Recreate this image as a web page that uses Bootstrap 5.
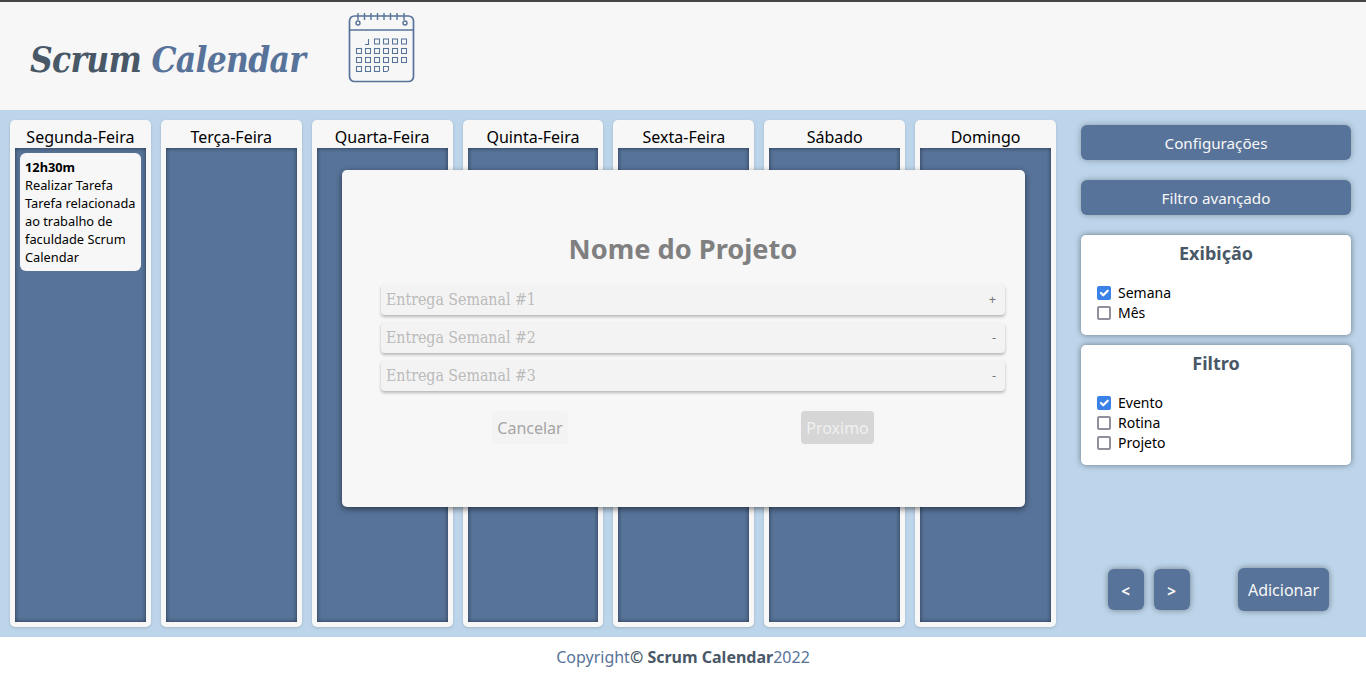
<!DOCTYPE html>
<html lang="pt-BR">
<head>
<meta charset="utf-8">
<title>Scrum Calendar</title>
<link href="https://cdn.jsdelivr.net/npm/bootstrap@5.3.0/dist/css/bootstrap.min.css" rel="stylesheet">
<style>
html,body{height:675px;overflow:hidden}
body{font-family:"Noto Sans",sans-serif;font-size:16px;color:#000;background:#fff}
.top-head{height:110px;background:#f7f7f7;border-top:2px solid #444;padding-left:30px}
.brand-text{font-family:"DejaVu Serif Condensed","DejaVu Serif",serif;font-stretch:condensed;font-weight:700;font-style:italic;font-size:35px;letter-spacing:-.72px;color:#495867;width:318px;line-height:1;margin:0;padding-top:6px}
.brand-text span{color:#577399}
.brand-icon{width:67px;height:72px;margin-top:9px}
.work-area{height:527px;background:#bdd5ea}
.days-wrap{width:1066px;padding:10px;gap:10px}
.day-col{flex:1 1 0;min-width:0;background:#f7f7f7;border-radius:5px;padding:0 5px 5px;box-shadow:0 1px 3px rgba(0,0,0,.15)}
.day-name{height:28px;line-height:34px;text-align:center;font-size:16px;white-space:nowrap}
.day-panel{background:#577399;padding:5px;box-shadow:inset 0 0 4px rgba(0,0,0,.55)}
.task-item{background:#f7f7f7;border-radius:6px;padding:5px;font-size:12.8px;line-height:18px}
.side-wrap{width:300px;padding:15px 15px 26px}
.side-btn{display:block;width:100%;height:35px;padding:1px 0 0;background:#577399;border:0;color:#f7f7f7;font-size:15.2px;border-radius:6px;box-shadow:0 0 6px rgba(0,0,0,.3);margin-bottom:20px}
.side-btn:hover,.nav-btn:hover,.add-btn:hover{background:#577399;color:#f7f7f7}
.opt-box{background:#fff;border:0;border-radius:5px;box-shadow:0 0 6px rgba(0,0,0,.45);margin-bottom:10px;padding:6px 16px 12px}
.opt-title{font-size:18px;font-weight:700;color:#495867;text-align:center;line-height:25px;margin:0 0 17px}
.opt-row{display:flex;align-items:center;min-height:20px;margin:0;padding:0;font-size:14px;line-height:20px}
.opt-row .form-check-input{width:14px;height:14px;margin:0 7px 0 0;float:none;border:2px solid #8f8f9d;border-radius:2px;flex:none}
.opt-row .form-check-input:checked{background-color:#3b82e8;border-color:#3b82e8;background-size:15px;background-position:center;background-origin:border-box}
.nav-btn{width:36px;height:41px;padding:3px 1px 0 0;background:#577399;border:0;color:#f7f7f7;font-size:15.2px;font-weight:700;border-radius:6px;box-shadow:0 0 6px rgba(0,0,0,.4)}
.add-btn{width:91px;height:43px;padding:0;background:#577399;border:0;color:#f7f7f7;font-size:16px;border-radius:6px;box-shadow:0 0 6px rgba(0,0,0,.4)}
.nav-group{gap:10px;margin-left:27px;margin-right:48px;margin-top:1px}
.bottom-row{align-items:flex-start}
.modal-box{position:absolute;left:342px;top:60px;width:683px;height:337px;background:#f7f7f7;border-radius:5px;box-shadow:0 2px 6px rgba(0,0,0,.5);padding:61px 20px 0 39px}
.modal-title-text{font-size:27.2px;font-weight:700;color:#808080;text-align:center;line-height:36px;margin:0 0 17px 0;padding:0;width:604px}
.entry-row{height:31px;background:#f3f3f3;border-radius:4px;box-shadow:0 2px 3px rgba(0,0,0,.25);margin-bottom:7px;padding:0 9px 0 5px}
.entry-row input{flex:1;border:0;outline:0;background:transparent;padding:1px 0 0;font-family:"DejaVu Serif Condensed","DejaVu Serif",serif;font-stretch:condensed;font-size:15.8px;color:#bbb;letter-spacing:-.02px}
.entry-row input::placeholder{color:#bbb;opacity:1}
.entry-sign{font-size:12.8px;color:#777}
.modal-actions{margin-top:20px}
.btn-cancel{width:76px;height:33px;padding:0;background:#f3f3f3;border:0;border-radius:4px;color:#a5a5a5;font-size:16px;margin-left:111px}
.btn-next{width:73px;height:33px;padding:0;background:#d6d6d6;border:0;border-radius:4px;color:#f0f0f0;font-size:16px;margin-left:233px}
.page-foot{height:38px;line-height:40px;text-align:center;color:#577399;font-size:16px;background:#fff}
.page-foot strong{color:#495867}
</style>
</head>
<body>
<header class="top-head d-flex align-items-center">
  <h1 class="brand-text">Scrum <span>Calendar</span></h1>
  <svg class="brand-icon align-self-start" viewBox="348 11 67 72" fill="none" stroke="#577399" stroke-width="1.4" aria-label="Calendário">
    <rect x="349.5" y="16" width="64" height="65.5" rx="5" stroke-width="1.7"/>
    <line x1="349.5" y1="30" x2="413.5" y2="30"/>
    <path d="M358 13v7M364.500 13v7M371 13v7M377.500 13v7M384 13v7M390.500 13v7M397 13v7M404 13v7"/>
    <circle cx="358" cy="23" r="2"/><circle cx="405" cy="23" r="2"/>
    <path d="M365 44.500h3.500v-5.500" stroke-width="1.1"/>
    <g stroke-width="1.050">
      <rect x="374.500" y="39" width="5" height="5"/><rect x="383.500" y="39" width="5" height="5"/><rect x="392.500" y="39" width="5" height="5"/><rect x="401.500" y="39" width="5" height="5"/>
      <rect x="356.500" y="48.500" width="5" height="5"/><rect x="365.500" y="48.500" width="5" height="5"/><rect x="374.500" y="48.500" width="5" height="5"/><rect x="383.500" y="48.500" width="5" height="5"/><rect x="392.500" y="48.500" width="5" height="5"/><rect x="401.500" y="48.500" width="5" height="5"/>
      <rect x="356.500" y="57.500" width="5" height="5"/><rect x="365.500" y="57.500" width="5" height="5"/><rect x="374.500" y="57.500" width="5" height="5"/><rect x="383.500" y="57.500" width="5" height="5"/><rect x="392.500" y="57.500" width="5" height="5"/><rect x="401.500" y="57.500" width="5" height="5"/>
      <rect x="356.500" y="66.500" width="5" height="5"/><rect x="365.500" y="66.500" width="5" height="5"/><rect x="374.500" y="66.500" width="5" height="5"/>
      <path d="M383.500 66.500h5v3.500l-1.500 1.500h-3.500z"/>
    </g>
  </svg>
</header>

<main class="work-area d-flex position-relative">
  <section class="days-wrap d-flex">
    <div class="day-col d-flex flex-column"><div class="day-name">Segunda-Feira</div>
      <div class="day-panel flex-grow-1"><div class="task-item"><strong>12h30m</strong><br>Realizar Tarefa<br>Tarefa relacionada ao trabalho de faculdade Scrum Calendar</div></div></div>
    <div class="day-col d-flex flex-column"><div class="day-name">Terça-Feira</div><div class="day-panel flex-grow-1"></div></div>
    <div class="day-col d-flex flex-column"><div class="day-name">Quarta-Feira</div><div class="day-panel flex-grow-1"></div></div>
    <div class="day-col d-flex flex-column"><div class="day-name">Quinta-Feira</div><div class="day-panel flex-grow-1"></div></div>
    <div class="day-col d-flex flex-column"><div class="day-name">Sexta-Feira</div><div class="day-panel flex-grow-1"></div></div>
    <div class="day-col d-flex flex-column"><div class="day-name">Sábado</div><div class="day-panel flex-grow-1"></div></div>
    <div class="day-col d-flex flex-column"><div class="day-name">Domingo</div><div class="day-panel flex-grow-1"></div></div>
  </section>

  <aside class="side-wrap d-flex flex-column">
    <button class="btn side-btn" type="button">Configurações</button>
    <button class="btn side-btn" type="button">Filtro avançado</button>
    <div class="opt-box">
      <h2 class="opt-title">Exibição</h2>
      <label class="opt-row"><input class="form-check-input" type="checkbox" checked>Semana</label>
      <label class="opt-row"><input class="form-check-input" type="checkbox">Mês</label>
    </div>
    <div class="opt-box">
      <h2 class="opt-title">Filtro</h2>
      <label class="opt-row"><input class="form-check-input" type="checkbox" checked>Evento</label>
      <label class="opt-row"><input class="form-check-input" type="checkbox">Rotina</label>
      <label class="opt-row"><input class="form-check-input" type="checkbox">Projeto</label>
    </div>
    <div class="bottom-row d-flex mt-auto">
      <div class="nav-group d-flex">
        <button class="btn nav-btn" type="button">&lt;</button>
        <button class="btn nav-btn" type="button">&gt;</button>
      </div>
      <button class="btn add-btn" type="button">Adicionar</button>
    </div>
  </aside>

  <div class="modal-box">
    <h2 class="modal-title-text">Nome do Projeto</h2>
    <div class="entry-row d-flex align-items-center"><input type="text" placeholder="Entrega Semanal #1"><span class="entry-sign">+</span></div>
    <div class="entry-row d-flex align-items-center"><input type="text" placeholder="Entrega Semanal #2"><span class="entry-sign">-</span></div>
    <div class="entry-row d-flex align-items-center"><input type="text" placeholder="Entrega Semanal #3"><span class="entry-sign">-</span></div>
    <div class="modal-actions d-flex">
      <button class="btn btn-cancel" type="button">Cancelar</button>
      <button class="btn btn-next" type="button">Proximo</button>
    </div>
  </div>
</main>

<footer class="page-foot">Copyright<strong>© Scrum Calendar</strong>2022</footer>
<script src="https://cdn.jsdelivr.net/npm/bootstrap@5.3.0/dist/js/bootstrap.bundle.min.js"></script>
</body>
</html>
